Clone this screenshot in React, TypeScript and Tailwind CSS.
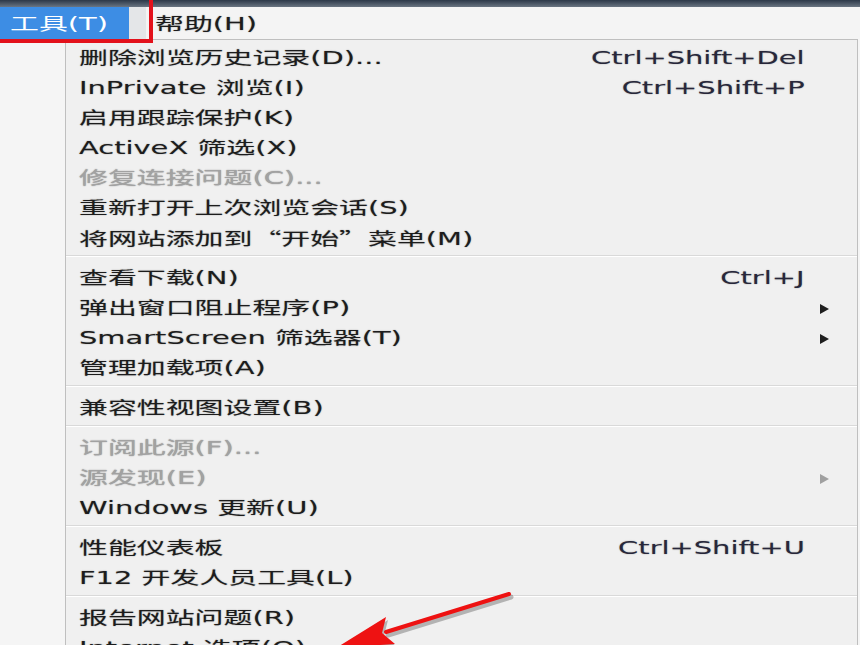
import React from "react";

type Item = {
  label: string;
  shortcut?: string;
  sub?: boolean;
  disabled?: boolean;
};

// IE "工具" menu, grouped by separators
const groups: Item[][] = [
  [
    { label: "删除浏览历史记录(D)...", shortcut: "Ctrl+Shift+Del" },
    { label: "InPrivate 浏览(I)", shortcut: "Ctrl+Shift+P" },
    { label: "启用跟踪保护(K)" },
    { label: "ActiveX 筛选(X)" },
    { label: "修复连接问题(C)...", disabled: true },
    { label: "重新打开上次浏览会话(S)" },
    { label: "将网站添加到“开始”菜单(M)" },
  ],
  [
    { label: "查看下载(N)", shortcut: "Ctrl+J" },
    { label: "弹出窗口阻止程序(P)", sub: true },
    { label: "SmartScreen 筛选器(T)", sub: true },
    { label: "管理加载项(A)" },
  ],
  [{ label: "兼容性视图设置(B)" }],
  [
    { label: "订阅此源(F)...", disabled: true },
    { label: "源发现(E)", disabled: true, sub: true },
    { label: "Windows 更新(U)" },
  ],
  [
    { label: "性能仪表板", shortcut: "Ctrl+Shift+U" },
    { label: "F12 开发人员工具(L)" },
  ],
  [{ label: "报告网站问题(R)" }, { label: "Internet 选项(O)" }],
];

// full-width quotes need the CJK face, DejaVu's are too narrow
const Label = ({ text }: { text: string }) => (
  <>
    {text.split(/([“”])/).map((part, i) =>
      part === "“" || part === "”" ? (
        <span key={i} className="font-['Noto_Sans_CJK_SC',sans-serif]">
          {part}
        </span>
      ) : (
        part
      )
    )}
  </>
);

const MenuRow = ({ item }: { item: Item }) => (
  <div className="flex h-[30px] items-center pt-[5px]">
    <div className="flex-1 pl-[13px]">
      <span
        className={`inline-block origin-left scale-x-[1.7] whitespace-pre ${
          item.disabled ? "text-[#a2a2a2]" : "text-[#1c1c1c]"
        }`}
      >
        <Label text={item.label} />
      </span>
    </div>
    {item.shortcut && (
      <span className="inline-block origin-right scale-x-[1.7] whitespace-nowrap text-[#27273a]">
        {item.shortcut}
      </span>
    )}
    <div className="flex w-[52px] items-center pl-[14px]">
      {item.sub && (
        <svg width="11" height="12" viewBox="0 0 11 12">
          <path
            d="M1 1 L10 6 L1 11 Z"
            fill={item.disabled ? "#a0a0a0" : "#1f1f1f"}
          />
        </svg>
      )}
    </div>
  </div>
);

const Separator = () => (
  <div className="flex h-[10px] flex-col justify-center">
    <div className="h-px bg-[#d9d9d9]" />
    <div className="h-px bg-white" />
  </div>
);

export default function App() {
  return (
    <div className="relative h-[645px] w-[860px] overflow-hidden bg-[#f5f5f5] font-['DejaVu_Sans','Noto_Sans_CJK_SC',sans-serif] text-[17px] [text-shadow:0_0_1px_rgba(0,0,0,0.45)]">
      {/* window chrome strip */}
      <div className="h-[7px] bg-gradient-to-b from-[#2c3848] to-[#6a7582]" />

      {/* menu bar */}
      <div className="flex h-[32px] items-stretch bg-[#f4f4f4]">
        <div className="flex w-[129px] items-center bg-[#3d8de4] pl-[10px] pt-[3px]">
          <span className="inline-block origin-left scale-x-[1.7] whitespace-nowrap text-white [text-shadow:none]">
            工具(T)
          </span>
        </div>
        <div className="w-[17px] bg-[#e4e6e8]" />
        <div className="flex items-center pl-[9px] pt-[3px]">
          <span className="inline-block origin-left scale-x-[1.7] whitespace-nowrap text-[#1c1c1c]">
            帮助(H)
          </span>
        </div>
      </div>

      {/* dropdown */}
      <div className="ml-[65px] w-[793px] border-x border-t border-[#bfbfbf] bg-[#f0f0f0] pt-[1px]">
        {groups.map((group, gi) => (
          <div key={gi}>
            {gi > 0 && <Separator />}
            {group.map((item) => (
              <MenuRow key={item.label} item={item} />
            ))}
          </div>
        ))}
      </div>

      {/* red highlight box around the menu title */}
      <div className="absolute left-[-10px] top-[-10px] h-[53px] w-[163px] border-4 border-[#e3111b]" />

      {/* red annotation arrow */}
      <svg
        className="pointer-events-none absolute left-0 top-0"
        width="860"
        height="645"
        viewBox="0 0 860 645"
      >
        <g opacity="0.35" transform="translate(2 3)">
          <line x1="509" y1="594" x2="386" y2="632" stroke="#444" strokeWidth="5" strokeLinecap="round" />
          <polygon points="336,648 386,617 382,633 395,644" fill="#444" />
        </g>
        <line x1="509" y1="594" x2="386" y2="632" stroke="#ee1212" strokeWidth="4" strokeLinecap="round" />
        <polygon points="336,648 386,617 382,633 395,644" fill="#ee1212" />
      </svg>
    </div>
  );
}
